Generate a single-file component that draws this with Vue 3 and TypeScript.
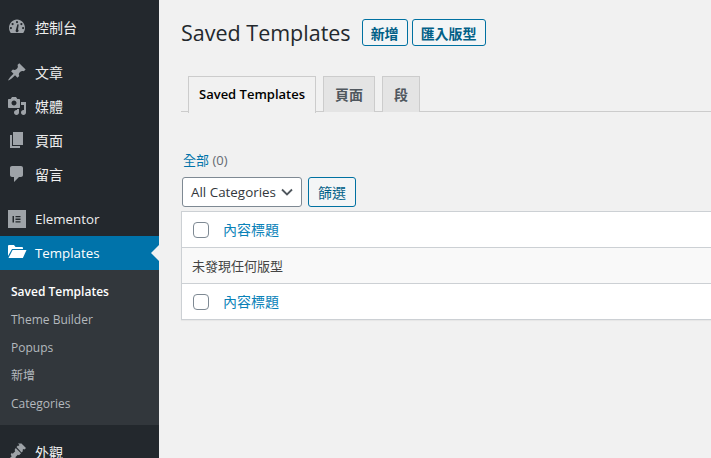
<script setup lang="ts">
const subItems = [
  { label: 'Saved Templates', current: true },
  { label: 'Theme Builder', current: false },
  { label: 'Popups', current: false },
  { label: '新增', current: false },
  { label: 'Categories', current: false },
]
const tabs = [
  { label: 'Saved Templates', active: true },
  { label: '頁面', active: false },
  { label: '段', active: false },
]
</script>

<template>
  <div class="page">
    <aside class="side">
      <div class="item">
        <svg class="ico" viewBox="0 0 20 20"><path fill-rule="evenodd" d="M3.760 16h12.480C17.340 14.570 18 12.790 18 10.860 18 6.190 14.420 2.400 10 2.400S2 6.190 2 10.860c0 1.930.66 3.710 1.760 5.140zM10 4a1.100 1.100 0 1 1 0 2.200A1.100 1.100 0 0 1 10 4zM5.600 6a1.100 1.100 0 1 1 0 2.200 1.100 1.100 0 0 1 0-2.200zM14.400 6a1.100 1.100 0 1 1 0 2.200 1.100 1.100 0 0 1 0-2.200zM3.900 10a1.100 1.100 0 1 1 0 2.200 1.100 1.100 0 0 1 0-2.200zM16.100 10a1.100 1.100 0 1 1 0 2.200 1.100 1.100 0 0 1 0-2.200zM11.700 7.500l-.7 5a1.500 1.500 0 1 1-2.100.3l1.500-5.500z"/></svg>
        <span>控制台</span>
      </div>
      <div class="item gap">
        <svg class="ico" viewBox="0 0 20 20"><path d="M10.440 3.020l1.820-1.820 6.360 6.350-1.830 1.820c-1.050-.68-2.480-.57-3.410.36l-.75.75c-.92.93-1.040 2.350-.35 3.410l-1.830 1.820-2.410-2.410-2.800 2.790c-.42.42-3.380 2.710-3.800 2.290s1.860-3.390 2.280-3.810l2.790-2.790L4.100 9.360l1.830-1.820c1.050.69 2.480.57 3.400-.36l.75-.75c.93-.92 1.050-2.350.36-3.410z"/></svg>
        <span>文章</span>
      </div>
      <div class="item">
        <svg class="ico" viewBox="0 0 20 20"><path fill-rule="evenodd" d="M13 11V4c0-.55-.45-1-1-1h-1.670L9 1H5L3.670 3H2c-.55 0-1 .45-1 1v7c0 .55.45 1 1 1h10c.55 0 1-.45 1-1zM7 4.500c1.380 0 2.500 1.120 2.500 2.500S8.380 9.500 7 9.500 4.500 8.380 4.500 7 5.620 4.500 7 4.500zM14 6h5v10.500c0 1.380-1.120 2.500-2.500 2.500S14 17.880 14 16.500s1.120-2.500 2.500-2.500c.17 0 .34.020.5.050V9h-3V6zm-4 8.050V13h2v3.500c0 1.380-1.120 2.500-2.500 2.500S7 17.880 7 16.500 8.120 14 9.500 14c.17 0 .34.020.5.050z"/></svg>
        <span>媒體</span>
      </div>
      <div class="item">
        <svg class="ico" viewBox="0 0 20 20"><path d="M6 15V2h10v13H6zm-1 1h8v2H3V5h2v11z"/></svg>
        <span>頁面</span>
      </div>
      <div class="item">
        <svg class="ico" viewBox="0 0 20 20"><path d="M5 2h9c1.100 0 2 .9 2 2v7c0 1.100-.9 2-2 2h-2l-5 5v-5H5c-1.100 0-2-.9-2-2V4c0-1.100.9-2 2-2z"/></svg>
        <span>留言</span>
      </div>
      <div class="item gap-small">
        <svg class="ico" viewBox="0 0 20 20"><path fill-rule="evenodd" d="M1 2h18v18H1zM5.500 8v6.500H7V8zM8.500 8v1.300h5V8zM8.500 10.600v1.300h5v-1.300zM8.500 13.200v1.300h5v-1.300z"/></svg>
        <span class="latin">Elementor</span>
      </div>
      <div class="item active">
        <svg class="ico" viewBox="0 0 20 20"><path d="M1 4a1 1 0 0 1 1-1h5l1.500 2h6.500a1 1 0 0 1 1 1v1H5L1 14z"/><path d="M5.600 8H19.500l-3.600 8H1.500z"/></svg>
        <span class="latin">Templates</span>
        <i class="arrow"></i>
      </div>
      <nav class="sub">
        <a v-for="s in subItems" :key="s.label" :class="{ cur: s.current }">{{ s.label }}</a>
      </nav>
      <div class="item gap">
        <svg class="ico" viewBox="0 0 20 20"><path d="M11 1.500h3.500L19 6l-1.500 1.500-1-.5-1 1 .5 1-1.500 1.500L9.500 5l1.500-1.500.5.500 1-1zM8.700 6l5.300 5.300-2 2-1.200-.6-2.500 2.500 1 1-2 1-1.500-1L2 19l-1-1 3.700-3.800-1-1.500 1-2 1 1 2.500-2.500-.6-1.200z"/></svg>
        <span>外觀</span>
      </div>
    </aside>

    <main class="main">
      <header class="head">
        <h1>Saved Templates</h1>
        <button class="btn strong">新增</button>
        <button class="btn strong">匯入版型</button>
      </header>

      <div class="tabs">
        <a v-for="t in tabs" :key="t.label" class="tab" :class="{ on: t.active }">{{ t.label }}</a>
      </div>

      <p class="filter-links"><a>全部</a> <span>(0)</span></p>

      <div class="controls">
        <div class="select">
          <span>All Categories</span>
          <svg viewBox="0 0 12 8" width="12" height="8"><path d="M1 1.500l5 5 5-5" fill="none" stroke="#50575e" stroke-width="1.800"/></svg>
        </div>
        <button class="btn">篩選</button>
      </div>

      <div class="table">
        <div class="row">
          <i class="check"></i><a>內容標題</a>
        </div>
        <div class="row empty">未發現任何版型</div>
        <div class="row">
          <i class="check"></i><a>內容標題</a>
        </div>
      </div>
    </main>
  </div>
</template>

<style>
html, body { margin: 0; height: 100%; overflow: hidden; background: #f1f1f1; }
</style>

<style scoped>
.page {
  display: flex;
  width: 711px;
  height: 458px;
  overflow: hidden;
  background: #f1f1f1;
  color: #3c434a;
  font: 13px/1.4 "Open Sans", "Noto Sans CJK TC", sans-serif;
}
.side {
  width: 159px;
  flex: none;
  background: #23282d;
  padding-top: 11px;
  box-sizing: border-box;
}
.item {
  display: flex;
  align-items: center;
  height: 34px;
  color: #eee;
  font-size: 14px;
  position: relative;
}
.item.gap { margin-top: 11px; }
.item.gap-small { margin-top: 10px; }
.latin { font-size: 13.300px; }
.ico {
  width: 20px;
  height: 20px;
  margin: 0 8px 2px 7px;
  fill: #9ea3a8;
  flex: none;
}
.item.active { background: #0073aa; color: #fff; }
.item.active .ico { fill: #fff; }
.arrow {
  position: absolute;
  right: 0;
  top: 9px;
  border: 8px solid transparent;
  border-right-color: #f1f1f1;
  border-left-width: 0;
}
.sub {
  display: flex;
  flex-direction: column;
  background: #32373c;
  padding: 8px 0 7px;
}
.sub a {
  height: 28px;
  line-height: 28px;
  padding-left: 11px;
  font-size: 12px;
  color: #b4b9be;
}
.sub a.cur { color: #fff; font-weight: 600; }
.main {
  flex: 1;
  min-width: 0;
  padding: 18px 0 0 22px;
}
.head {
  display: flex;
  align-items: flex-start;
  height: 28px;
  gap: 4px;
}
h1 {
  margin: 1px 7px 0 0;
  font-size: 21.500px;
  font-weight: 400;
  color: #23282d;
  line-height: 28px;
}
.btn {
  height: 30px;
  padding: 0 9px;
  border: 1px solid #0071a1;
  border-radius: 3px;
  background: #f3f5f6;
  color: #016087;
  font: 14px "Open Sans", "Noto Sans CJK TC", sans-serif;
  box-sizing: border-box;
}
.btn.strong { font-weight: 600; height: 27px; padding: 0 8px; margin-top: 1px; }
.tabs {
  display: flex;
  align-items: flex-start;
  gap: 7px;
  height: 35px;
  margin-top: 30px;
  padding-left: 7px;
  border-bottom: 1px solid #ccc;
}
.tab {
  height: 35px;
  line-height: 35px;
  padding: 0 11px;
  border: 1px solid #ccc;
  border-bottom: 0;
  background: #e4e4e4;
  color: #50575e;
  font-size: 14px;
  font-weight: 600;
}
.tab.on {
  background: #f1f1f1;
  color: #000;
  height: 36px;
  padding: 0 10px;
  font-size: 13px;
}
.filter-links { margin: 38px 0 0 2px; line-height: 20px; font-size: 13px; color: #646970; }
.filter-links a { color: #0073aa; }
.controls { display: flex; gap: 6px; margin: 7px 0 0 1px; }
.select {
  display: flex;
  align-items: center;
  justify-content: space-between;
  width: 120px;
  height: 30px;
  padding: 0 8px;
  border: 1px solid #7e8993;
  border-radius: 3px;
  background: #fff;
  color: #32373c;
  font-size: 13.400px;
  box-sizing: border-box;
}
.table {
  margin-top: 4px;
  border: 1px solid #ccd0d4;
  border-right: 0;
  background: #fff;
  box-shadow: 0 1px 1px rgba(0, 0, 0, .04);
}
.row {
  display: flex;
  align-items: center;
  height: 35px;
  padding-left: 11px;
  font-size: 13px;
}
.row + .row { border-top: 1px solid #ccd0d4; }
.row a { color: #0a82b8; font-size: 14px; margin-left: -1px; }
.row.empty { background: #f9f9f9; padding: 2px 0 0 10px; box-sizing: content-box; height: 33px; color: #444; }
.check {
  width: 16px;
  height: 16px;
  margin-right: 15px;
  border: 1px solid #7e8993;
  border-radius: 4px;
  background: #fff;
  box-sizing: border-box;
}
</style>
